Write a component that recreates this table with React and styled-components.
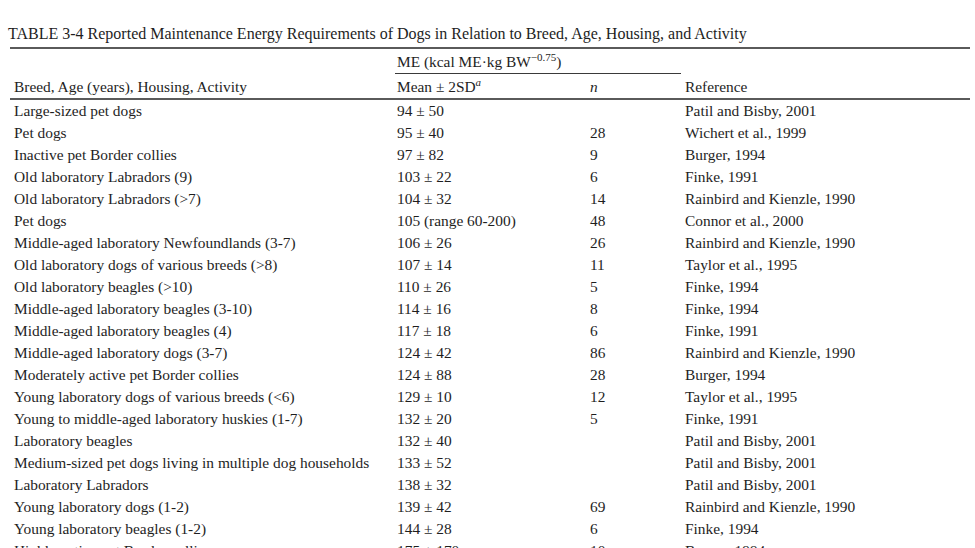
import React from 'react'
import styled, { createGlobalStyle } from 'styled-components'

const Global = createGlobalStyle`
  html, body {
    margin: 0;
    padding: 0;
    background: #ffffff;
  }
  body {
    font-family: "Liberation Serif", "Times New Roman", serif;
    color: #1e1e1e;
  }
`

const Page = styled.div`
  width: 975px;
  height: 548px;
  overflow: hidden;
  padding-top: 23px;
  box-sizing: border-box;
`

const Title = styled.div`
  font-size: 16px;
  line-height: 22px;
  padding: 0 0 2px 8px;
  white-space: nowrap;
`

const Table = styled.table`
  margin-left: 10px;
  width: 960px;
  border-collapse: collapse;
  table-layout: fixed;
  border-top: 2px solid #5a5a5a;
  font-size: 15.4px;
`

const Cell = styled.td`
  padding: ${p => (p.$head ? '2px 0 0 4px' : '0 0 0 4px')};
  line-height: 22px;
  height: 22px;
  vertical-align: top;
  white-space: nowrap;
  text-align: left;
  font-weight: normal;
  border-bottom: ${p => (p.$rule ? '2px solid #5a5a5a' : 'none')};
`

const Group = styled.span`
  display: block;
  margin-left: -2px;
  padding-left: 2px;
  border-bottom: 1px solid #3a3a3a;
  line-height: 22px;
`

const Sup = styled.sup`
  font-size: 11px;
  line-height: 0;
  vertical-align: 6px;
  font-style: ${p => (p.$italic ? 'italic' : 'normal')};
`

const Em = styled.i`
  font-style: italic;
`

const rows = [
  ['Large-sized pet dogs', '94 ± 50', '', 'Patil and Bisby, 2001'],
  ['Pet dogs', '95 ± 40', '28', 'Wichert et al., 1999'],
  ['Inactive pet Border collies', '97 ± 82', '9', 'Burger, 1994'],
  ['Old laboratory Labradors (9)', '103 ± 22', '6', 'Finke, 1991'],
  ['Old laboratory Labradors (>7)', '104 ± 32', '14', 'Rainbird and Kienzle, 1990'],
  ['Pet dogs', '105 (range 60-200)', '48', 'Connor et al., 2000'],
  ['Middle-aged laboratory Newfoundlands (3-7)', '106 ± 26', '26', 'Rainbird and Kienzle, 1990'],
  ['Old laboratory dogs of various breeds (>8)', '107 ± 14', '11', 'Taylor et al., 1995'],
  ['Old laboratory beagles (>10)', '110 ± 26', '5', 'Finke, 1994'],
  ['Middle-aged laboratory beagles (3-10)', '114 ± 16', '8', 'Finke, 1994'],
  ['Middle-aged laboratory beagles (4)', '117 ± 18', '6', 'Finke, 1991'],
  ['Middle-aged laboratory dogs (3-7)', '124 ± 42', '86', 'Rainbird and Kienzle, 1990'],
  ['Moderately active pet Border collies', '124 ± 88', '28', 'Burger, 1994'],
  ['Young laboratory dogs of various breeds (<6)', '129 ± 10', '12', 'Taylor et al., 1995'],
  ['Young to middle-aged laboratory huskies (1-7)', '132 ± 20', '5', 'Finke, 1991'],
  ['Laboratory beagles', '132 ± 40', '', 'Patil and Bisby, 2001'],
  ['Medium-sized pet dogs living in multiple dog households', '133 ± 52', '', 'Patil and Bisby, 2001'],
  ['Laboratory Labradors', '138 ± 32', '', 'Patil and Bisby, 2001'],
  ['Young laboratory dogs (1-2)', '139 ± 42', '69', 'Rainbird and Kienzle, 1990'],
  ['Young laboratory beagles (1-2)', '144 ± 28', '6', 'Finke, 1994'],
  ['Highly active pet Border collies', '175 ± 170', '10', 'Burger, 1994'],
]

export default function App() {
  return (
    <Page>
      <Global />
      <Title>
        TABLE 3-4 Reported Maintenance Energy Requirements of Dogs in Relation to Breed, Age, Housing, and Activity
      </Title>
      <Table>
        <colgroup>
          <col style={{ width: 383 }} />
          <col style={{ width: 193 }} />
          <col style={{ width: 95 }} />
          <col style={{ width: 289 }} />
        </colgroup>
        <thead>
          <tr>
            <Cell as="th" $head />
            <Cell as="th" $head colSpan={2}>
              <Group>
                ME (kcal ME·kg BW<Sup>−0.75</Sup>)
              </Group>
            </Cell>
            <Cell as="th" $head />
          </tr>
          <tr>
            <Cell as="th" $head $rule>Breed, Age (years), Housing, Activity</Cell>
            <Cell as="th" $head $rule>
              Mean ± 2SD<Sup $italic>a</Sup>
            </Cell>
            <Cell as="th" $head $rule>
              <Em>n</Em>
            </Cell>
            <Cell as="th" $head $rule>Reference</Cell>
          </tr>
        </thead>
        <tbody>
          {rows.map((r, i) => (
            <tr key={i}>
              {r.map((c, j) => (
                <Cell key={j}>{c}</Cell>
              ))}
            </tr>
          ))}
        </tbody>
      </Table>
    </Page>
  )
}
